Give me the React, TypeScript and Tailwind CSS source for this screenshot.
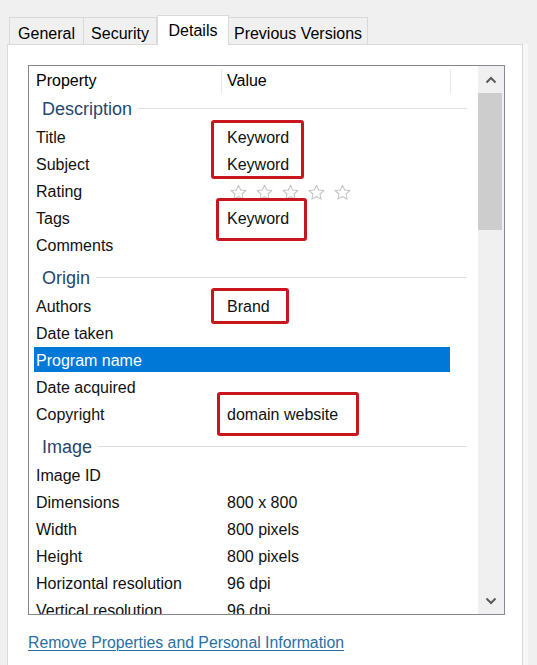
import React from "react";

type Item = { label: string; value?: string; stars?: boolean; selected?: boolean };
type Group = { name: string; first?: boolean; items: Item[] };

const groups: Group[] = [
  {
    name: "Description",
    first: true,
    items: [
      { label: "Title", value: "Keyword" },
      { label: "Subject", value: "Keyword" },
      { label: "Rating", stars: true },
      { label: "Tags", value: "Keyword" },
      { label: "Comments" },
    ],
  },
  {
    name: "Origin",
    items: [
      { label: "Authors", value: "Brand" },
      { label: "Date taken" },
      { label: "Program name", selected: true },
      { label: "Date acquired" },
      { label: "Copyright", value: "domain website" },
    ],
  },
  {
    name: "Image",
    items: [
      { label: "Image ID" },
      { label: "Dimensions", value: "800 x 800" },
      { label: "Width", value: "800 pixels" },
      { label: "Height", value: "800 pixels" },
      { label: "Horizontal resolution", value: "96 dpi" },
      { label: "Vertical resolution", value: "96 dpi" },
    ],
  },
];

function Star() {
  return (
    <svg width="19" height="19" viewBox="0 0 24 24" className="shrink-0">
      <path
        d="M12 2.8l2.8 6 6.5.7-4.9 4.4 1.4 6.5L12 17.1l-5.8 3.3 1.4-6.5-4.9-4.4 6.5-.7z"
        fill="none"
        stroke="#c2c2c2"
        strokeWidth="1.3"
        strokeLinejoin="round"
      />
    </svg>
  );
}

function Row({ item }: { item: Item }) {
  return (
    <div className="h-[27px] py-px pl-[5px]">
      <div
        className={
          "w-[416px] h-[25px] pt-[2px] flex items-center " +
          (item.selected ? "bg-[#0078d7] text-white" : "text-[#111]")
        }
      >
        <div className="w-[193px] pl-[2px] whitespace-nowrap overflow-hidden">{item.label}</div>
        <div className="flex-1 whitespace-nowrap overflow-hidden">
          {item.stars ? (
            <div className="flex items-center gap-[7px] pl-[2px] pt-[1px]">
              <Star />
              <Star />
              <Star />
              <Star />
              <Star />
            </div>
          ) : (
            item.value ?? ""
          )}
        </div>
      </div>
    </div>
  );
}

function GroupHeader({ name, first }: { name: string; first?: boolean }) {
  return (
    <div className={"h-[29px] flex items-center pl-[13px] pr-[11px] " + (first ? "" : "mt-[5px]")}>
      <span className="text-[18px] leading-[20px] text-[#26466f]">{name}</span>
      <div className="flex-1 h-px bg-[#dedede] ml-[6px]" />
    </div>
  );
}

export default function App() {
  return (
    <div className="relative w-[537px] h-[665px] overflow-hidden bg-[#f0f0f0] font-['Liberation_Sans',Arial,sans-serif] text-[16px] leading-[18px] text-black">
      {/* Tabs */}
      <div className="flex items-end pt-[15px] pl-[9px]">
        <div className="w-[75px] h-[27px] pt-[5px] flex items-center justify-center border-l border-t border-r border-[#d9d9d9] bg-[#f0f0f0]">
          General
        </div>
        <div className="w-[73px] h-[27px] pt-[5px] flex items-center justify-center border-t border-r border-[#d9d9d9] bg-[#f0f0f0]">
          Security
        </div>
        <div className="relative z-10 -mb-px w-[72px] h-[30px] flex items-center justify-center border-l border-t border-r border-[#d9d9d9] bg-white">
          Details
        </div>
        <div className="w-[139px] h-[27px] pt-[5px] flex items-center justify-center border-t border-r border-[#d9d9d9] bg-[#f0f0f0]">
          Previous Versions
        </div>
      </div>

      {/* Panel */}
      <div className="ml-[7px] w-[516px] h-[640px] bg-white border-l border-t border-r border-[#d9d9d9] shadow-[5px_0_0_#f7f7f7]">
        {/* List box */}
        <div className="ml-[20px] mt-[20px] w-[477px] h-[550px] border border-[#828790] flex">
          <div className="w-[449px] h-full overflow-hidden">
            {/* Header */}
            <div className="h-[28px] pt-[2px] flex items-center">
              <div className="w-[192px] pl-[7px]">Property</div>
              <div className="w-px h-[24px] bg-[#e8e8e8]" />
              <div className="w-[228px] pl-[5px]">Value</div>
              <div className="w-px h-[24px] bg-[#e8e8e8]" />
            </div>
            {groups.map((g) => (
              <div key={g.name}>
                <GroupHeader name={g.name} first={g.first} />
                {g.items.map((it) => (
                  <Row key={it.label} item={it} />
                ))}
              </div>
            ))}
          </div>
          {/* Scrollbar */}
          <div className="w-[26px] h-full bg-[#f0f0f0] flex flex-col">
            <div className="h-[27px] flex items-center justify-center pr-px">
              <svg width="12" height="8" viewBox="0 0 12 8">
                <polyline points="1.5,6.5 6,2 10.5,6.5" fill="none" stroke="#5a5a5a" strokeWidth="2" />
              </svg>
            </div>
            <div className="h-[137px] w-[24px] bg-[#cdcdcd]" />
            <div className="flex-1" />
            <div className="h-[27px] flex items-center justify-center pr-px">
              <svg width="12" height="8" viewBox="0 0 12 8">
                <polyline points="1.5,1.5 6,6 10.5,1.5" fill="none" stroke="#5a5a5a" strokeWidth="2" />
              </svg>
            </div>
          </div>
        </div>

        {/* Link */}
        <div className="ml-[20px] mt-[19px] leading-[18px]">
          <span className="text-[15.8px] text-[#2a6fa6] underline underline-offset-2 decoration-1">
            Remove Properties and Personal Information
          </span>
        </div>
      </div>

      {/* Red annotation boxes */}
      <div className="absolute left-[211px] top-[120px] w-[93px] h-[59px] border-[3px] border-[#c8161e] rounded-[3px]" />
      <div className="absolute left-[216px] top-[198px] w-[91px] h-[43px] border-[3px] border-[#c8161e] rounded-[3px]" />
      <div className="absolute left-[211px] top-[288px] w-[78px] h-[36px] border-[3px] border-[#c8161e] rounded-[3px]" />
      <div className="absolute left-[217px] top-[392px] w-[142px] h-[44px] border-[3px] border-[#c8161e] rounded-[3px]" />
    </div>
  );
}
